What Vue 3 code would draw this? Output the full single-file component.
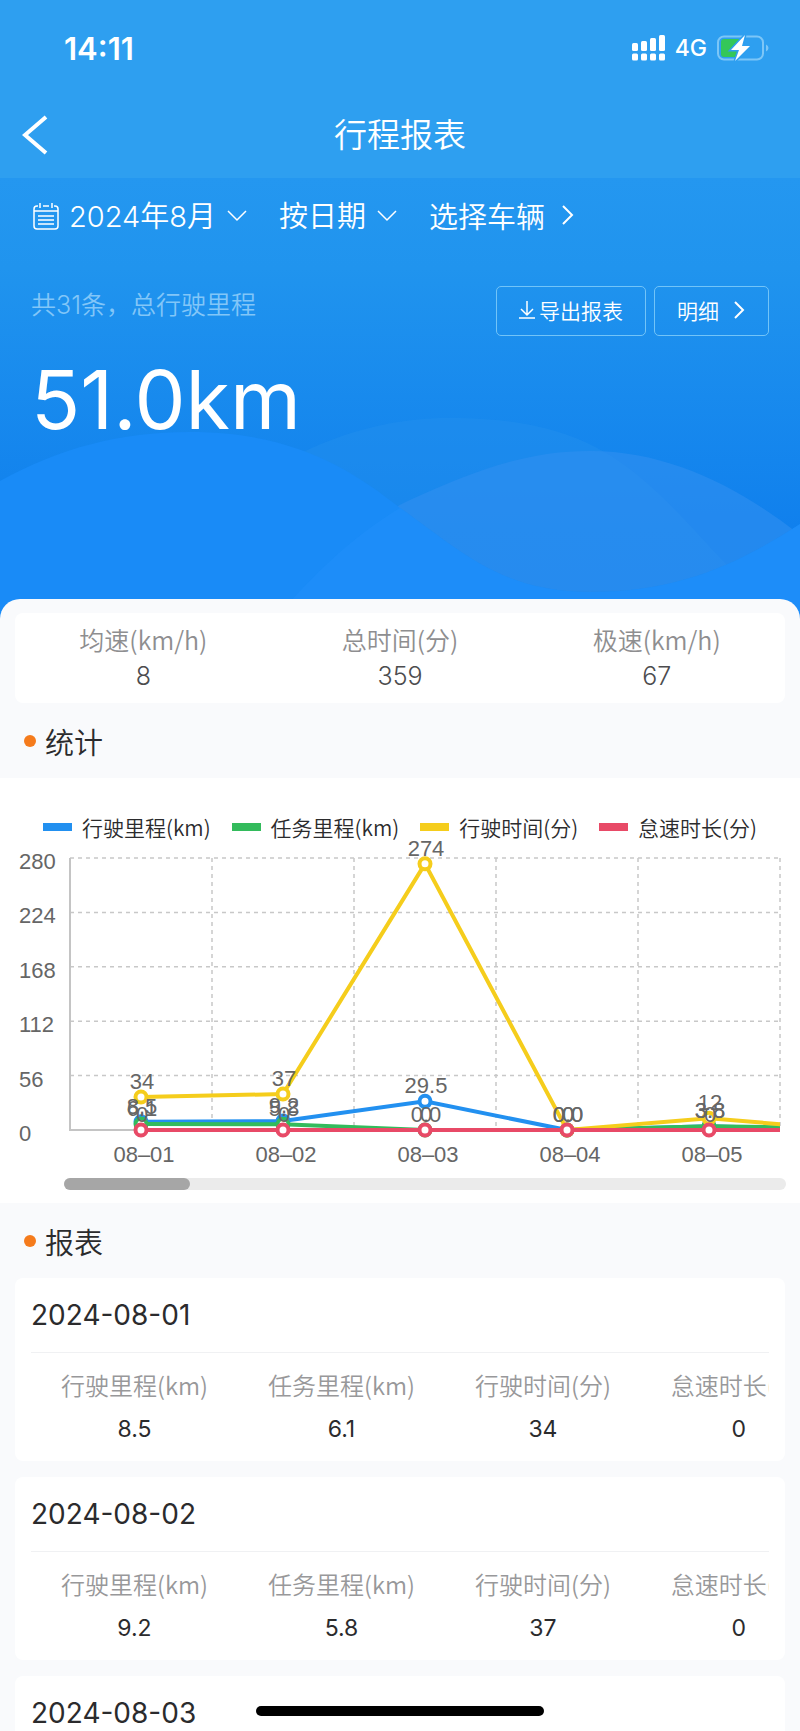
<template>
  <div class="page">
    <header class="top">
      <div class="status">
        <span class="time">14:11</span>
        <div class="status-right">
          <svg class="signal" viewBox="0 0 33 26" aria-hidden="true">
            <rect x="0" y="8" width="6" height="8" rx="1.5" />
            <rect x="9" y="6" width="6" height="10" rx="1.5" />
            <rect x="18" y="3" width="6" height="13" rx="1.5" />
            <rect x="27" y="0" width="6" height="16" rx="1.5" />
            <rect v-for="x of [0, 9, 18, 27]" :x="x" y="18.5" width="6" height="7" rx="1.5" />
          </svg>
          <span class="network">4G</span>
          <svg class="battery" viewBox="0 0 52 26" aria-hidden="true">
            <rect x="1" y="1.5" width="45" height="23" rx="6" fill="none" stroke="#7cc6f7" stroke-width="2" />
            <path d="M49 9.5q2.5 1 2.5 3.5t-2.5 3.5z" fill="#7cc6f7" />
            <path d="M7 4h15v18H7q-3 0-3-3V7q0-3 3-3z" fill="#34c759" />
            <path d="M28 0L14 15h8l-4 11L33 11h-8z" fill="#fff" stroke="#2e9ff0" stroke-width="3" paint-order="stroke" />
          </svg>
        </div>
      </div>
      <nav class="nav">
        <button class="back" aria-label="返回">
          <svg viewBox="0 0 26 40"><path d="M24 2L3 20l21 18" /></svg>
        </button>
        <h1>行程报表</h1>
      </nav>
    </header>

    <section class="hero">
      <svg class="waves" viewBox="0 0 800 447" preserveAspectRatio="none" aria-hidden="true">
        <path class="wave-back" d="M240 310C330 250 400 240 450 240C560 240 610 270 660 317C710 365 730 400 800 447H240Z" />
        <path class="wave-mid" d="M270 447C330 380 370 340 410 322C480 290 530 273 590 273C670 273 740 310 800 357V447Z" />
        <path class="wave-front" d="M0 303C60 270 120 254 190 254C290 254 350 290 400 330C460 372 500 414 590 414C680 414 740 385 800 346V447H0Z" />
        <path class="wave-glow" d="M270 447C310 400 350 360 400 330C460 372 500 414 590 414C680 414 740 385 800 346V447Z" />
      </svg>

      <div class="filters">
        <label class="filter">
          <svg class="calendar" viewBox="0 0 26 28" aria-hidden="true">
            <path d="M5 4H4Q1 4 1 7v17q0 3 3 3h18q3 0 3-3V7q0-3-3-3h-1M10 4h6M7 1v5M19 1v5M1 9h24M5 14h16M5 18h16M5 22h16" />
          </svg>
          <select v-model="month" aria-label="月份">
            <option>2024年8月</option>
          </select>
          <svg class="chevron-down" viewBox="0 0 20 12" aria-hidden="true"><path d="M1 1l9 9 9-9" /></svg>
        </label>
        <label class="filter">
          <select v-model="groupBy" aria-label="统计方式">
            <option>按日期</option>
          </select>
          <svg class="chevron-down" viewBox="0 0 20 12" aria-hidden="true"><path d="M1 1l9 9 9-9" /></svg>
        </label>
        <button class="filter vehicle">
          选择车辆
          <svg class="chevron-right" viewBox="0 0 12 20" aria-hidden="true"><path d="M1 1l9 9-9 9" /></svg>
        </button>
      </div>

      <div class="overview">
        <div>
          <p class="caption">共31条，总行驶里程</p>
          <p class="total">51.0km</p>
        </div>
        <div class="actions">
          <button>
            <svg class="download" viewBox="0 0 16 18" aria-hidden="true"><path d="M8 0v14M2 8l6 6 6-6M0 17h16" /></svg>
            导出报表
          </button>
          <button>
            明细
            <svg class="detail-arrow" viewBox="0 0 12 20" aria-hidden="true"><path d="M1 2l8 8-8 8" /></svg>
          </button>
        </div>
      </div>
    </section>

    <main class="sheet">
      <dl class="summary">
        <div v-for="item of summary">
          <dt>{{ item.label }}</dt>
          <dd>{{ item.value }}</dd>
        </div>
      </dl>

      <h2>统计</h2>
      <section class="chart">
        <ul class="legend">
          <li v-for="s of series">
            <i :style="{ background: s.color }"></i>{{ s.name }}
          </li>
        </ul>
        <svg class="plot" viewBox="0 0 800 333" role="img" aria-label="统计">
          <defs>
            <clipPath id="plot-area"><rect x="70" y="0" width="710" height="333" /></clipPath>
          </defs>
          <g class="grid">
            <line v-for="n of 5" x1="70" x2="780" :y1="yPos(n * 56)" :y2="yPos(n * 56)" />
            <line v-for="n of 5" :x1="70 + n * step" :x2="70 + n * step" :y1="yPos(280)" :y2="yPos(0)" />
          </g>
          <path class="axis" :d="`M70 ${yPos(280)}V${yPos(0)}H780`" />
          <g clip-path="url(#plot-area)">
            <template v-for="s of series">
              <polyline class="line" :points="linePoints(s.values)" :stroke="s.color" />
              <circle v-for="(v, i) of s.values" class="dot" :cx="xPos(i)" :cy="yPos(v)" r="5.5" :stroke="s.color" />
            </template>
          </g>
          <template v-for="s of series">
            <text v-for="(v, i) of s.values.slice(0, 5)" class="value" :x="xPos(i) + 1" :y="yPos(v) - 8">{{ v }}</text>
          </template>
          <text v-for="n of [280, 224, 168, 112, 56, 0]" class="tick" x="19" :y="yPos(n) + 11">{{ n }}</text>
          <text v-for="(d, i) of days" class="value" :x="xPos(i) + 3" y="321">{{ d }}</text>
        </svg>
        <div class="scrollbar"><div class="thumb" :style="{ width: thumbWidth }"></div></div>
      </section>

      <h2>报表</h2>
      <article class="report" v-for="row of reports">
        <h3>{{ row.date }}</h3>
        <div class="report-body">
          <table>
            <thead>
              <tr><th v-for="s of series">{{ s.name }}</th></tr>
            </thead>
            <tbody>
              <tr><td v-for="v of row.values">{{ v }}</td></tr>
            </tbody>
          </table>
        </div>
      </article>
    </main>

    <div class="home-indicator"></div>
  </div>
</template>

<script setup>
  import { ref, computed } from 'vue';

  const month = ref("2024年8月");
  const groupBy = ref("按日期");

  const summary = [
    { label: "均速(km/h)", value: 8 },
    { label: "总时间(分)", value: 359 },
    { label: "极速(km/h)", value: 67 },
  ];

  // the sixth value lies outside the visible part of the chart
  const series = [
    { name: "行驶里程(km)", color: "#2290f0", values: ["8.5", "9.2", "29.5", "0.0", "3.8", "0.0"] },
    { name: "任务里程(km)", color: "#33bb5c", values: ["6.1", "5.8", "0.0", "0.0", "3.8", "2.0"] },
    { name: "行驶时间(分)", color: "#f5cd1c", values: [34, 37, 274, 0, 12, 0] },
    { name: "怠速时长(分)", color: "#e84a67", values: [0, 0, 0, 0, 0, 0] },
  ];

  const days = ["08–01", "08–02", "08–03", "08–04", "08–05"];

  const reports = [
    { date: "2024-08-01", values: ["8.5", "6.1", 34, 0] },
    { date: "2024-08-02", values: ["9.2", "5.8", 37, 0] },
    { date: "2024-08-03", values: ["29.5", "0.0", 274, 0] },
  ];

  const step = 142;
  const totalDays = 31;

  const thumbWidth = computed(() => `${(days.length + 0.4) / totalDays * 100}%`);

  function xPos(index) {
    return 70 + step * (index + 0.5);
  }

  function yPos(value) {
    return 289 - value / 280 * 272;
  }

  function linePoints(values) {
    return values.map((v, i) => `${xPos(i)},${yPos(v)}`).join(" ");
  }
</script>

<style>
body {
  background: #f9fafc;
}
</style>

<style scoped>
.page {
  height: 100vh;
  overflow: hidden;
  font-family: Inter, "Noto Sans CJK SC", sans-serif;
  font-weight: 350;
  color: #2b2b2d;
}

h1, h2, h3, p, dl, dd, ul {
  margin: 0;
  padding: 0;
  font-weight: inherit;
}

button, select {
  appearance: none;
  border: none;
  padding: 0;
  background: transparent;
  color: inherit;
  font: inherit;
}

.top svg, .hero svg {
  flex: none;
}

.top {
  background: #2e9ff0;
  color: #fff;
}

.status {
  height: 96px;
  padding: 0 31px 0 64px;
  display: flex;
  align-items: center;
  justify-content: space-between;
}

.time {
  font-size: 31px;
  font-weight: 600;
}

.status-right {
  display: flex;
  align-items: center;
  gap: 10px;
}

.signal {
  width: 33px;
  height: 26px;
  fill: #fff;
}

.network {
  font-size: 23px;
  font-weight: 500;
}

.battery {
  width: 52px;
  height: 26px;
}

.nav {
  padding: 0 22px 4px;
  display: grid;
  grid-template-columns: 1fr auto 1fr;
  align-items: center;
}

.nav h1 {
  font-size: 33px;
  line-height: 78px;
}

.back {
  justify-self: start;
  display: flex;
}

.back svg {
  width: 26px;
  height: 40px;
  fill: none;
  stroke: #fff;
  stroke-width: 4;
}

.hero {
  position: relative;
  padding: 18px 31px 177px;
  color: #fff;
  background: linear-gradient(#2497f0, #2094ee 20%, #1080ed 78%, #0f7eec);
}

.waves {
  position: absolute;
  inset: 0;
  width: 100%;
  height: 100%;
}

.wave-back {
  fill: #2490ee;
  opacity: 0.45;
}

.wave-mid {
  fill: #3090f0;
  opacity: 0.6;
}

.wave-front {
  fill: #198bf7;
}

.wave-glow {
  fill: #2090fa;
  opacity: 0.6;
}

.filters {
  position: relative;
  display: flex;
  align-items: center;
  gap: 32px;
  height: 40px;
  padding-left: 2px;
  font-size: 29px;
}

.filter {
  display: flex;
  align-items: center;
  gap: 10px;
}

.vehicle {
  gap: 17px;
  padding-bottom: 3px;
}

.filters svg, .actions svg {
  fill: none;
  stroke: #fff;
  stroke-width: 1.5;
}

.calendar {
  width: 26px;
  height: 28px;
}

.chevron-down {
  width: 20px;
  height: 12px;
}

.filters .chevron-right {
  width: 12px;
  height: 20px;
  stroke-width: 2;
}

.overview {
  position: relative;
  display: flex;
  justify-content: space-between;
  align-items: flex-start;
  margin-top: 50px;
}

.caption {
  font-size: 25px;
  line-height: 38px;
  color: #82c6f8;
}

.total {
  margin-top: 28px;
  font-size: 81px;
  font-weight: 400;
  line-height: 96px;
}

.actions {
  display: flex;
  gap: 8px;
}

.actions button {
  display: flex;
  align-items: center;
  gap: 4px;
  height: 50px;
  padding: 0 22px 2px;
  border: 1px solid #72c4f8;
  border-radius: 5px;
  font-size: 21px;
}

.download {
  width: 16px;
  height: 18px;
}

.actions .detail-arrow {
  width: 12px;
  height: 20px;
  margin-left: 11px;
  stroke-width: 2;
}

.sheet {
  position: relative;
  margin-top: -26px;
  padding-top: 14px;
  border-radius: 20px 20px 0 0;
  background: #f9fafc;
}

.summary {
  display: flex;
  margin: 0 15px;
  padding: 7px 0 9px;
  border-radius: 8px;
  background: #fff;
  text-align: center;
  font-size: 25px;
}

.summary div {
  flex: 1;
}

dt {
  font-family: "Noto Sans CJK SC", sans-serif;
  line-height: 38px;
  color: #8e8e90;
}

dd {
  line-height: 36px;
  color: #4c4c4e;
}

h2 {
  display: flex;
  align-items: center;
  gap: 9px;
  height: 75px;
  padding-left: 24px;
  font-size: 29px;
}

h2::before {
  content: "";
  width: 12px;
  height: 12px;
  border-radius: 50%;
  background: #f57b1c;
}

.chart {
  padding: 35px 0 13px;
  background: #fff;
}

.legend {
  display: flex;
  justify-content: center;
  gap: 21px;
  height: 28px;
  list-style: none;
  font-family: "Noto Sans CJK SC", sans-serif;
  font-size: 21px;
  line-height: 28px;
}

.legend li {
  display: flex;
  align-items: center;
  gap: 10px;
}

.legend i {
  width: 29px;
  height: 8px;
}

.plot {
  display: block;
  width: 100%;
  overflow: visible;
  font-family: "Liberation Sans", sans-serif;
  font-size: 22px;
}

.grid line {
  stroke: #c8c8c8;
  stroke-width: 1.5;
  stroke-dasharray: 4 4;
}

.axis {
  fill: none;
  stroke: #c4c4c4;
  stroke-width: 2;
}

.line {
  fill: none;
  stroke-width: 4;
}

.dot {
  fill: #fff;
  stroke-width: 4;
}

.value {
  fill: #666;
  text-anchor: middle;
}

.tick {
  fill: #666;
}

.scrollbar {
  height: 12px;
  margin: 4px 14px 0 64px;
  border-radius: 6px;
  background: #ebebeb;
}

.thumb {
  height: 100%;
  border-radius: 6px;
  background: #a6a6a6;
}

.report {
  margin: 0 15px 16px;
  padding: 0 16px 8px;
  border-radius: 8px;
  background: #fff;
}

h3 {
  height: 74px;
  border-bottom: 1px solid #f0f1f3;
  font-size: 28px;
  font-weight: 400;
  line-height: 74px;
}

.report-body {
  padding-top: 12px;
  overflow: hidden;
}

table {
  border-collapse: collapse;
  white-space: nowrap;
  text-align: center;
}

th, td {
  padding: 0 30px;
}

th {
  font-family: "Noto Sans CJK SC", sans-serif;
  font-size: 24px;
  font-weight: inherit;
  line-height: 40px;
  color: #98989a;
}

td {
  font-size: 23px;
  font-weight: 400;
  line-height: 48px;
}

.home-indicator {
  position: fixed;
  left: 50%;
  bottom: 15px;
  width: 36%;
  height: 10px;
  border-radius: 5px;
  background: #000;
  transform: translateX(-50%);
}
</style>
